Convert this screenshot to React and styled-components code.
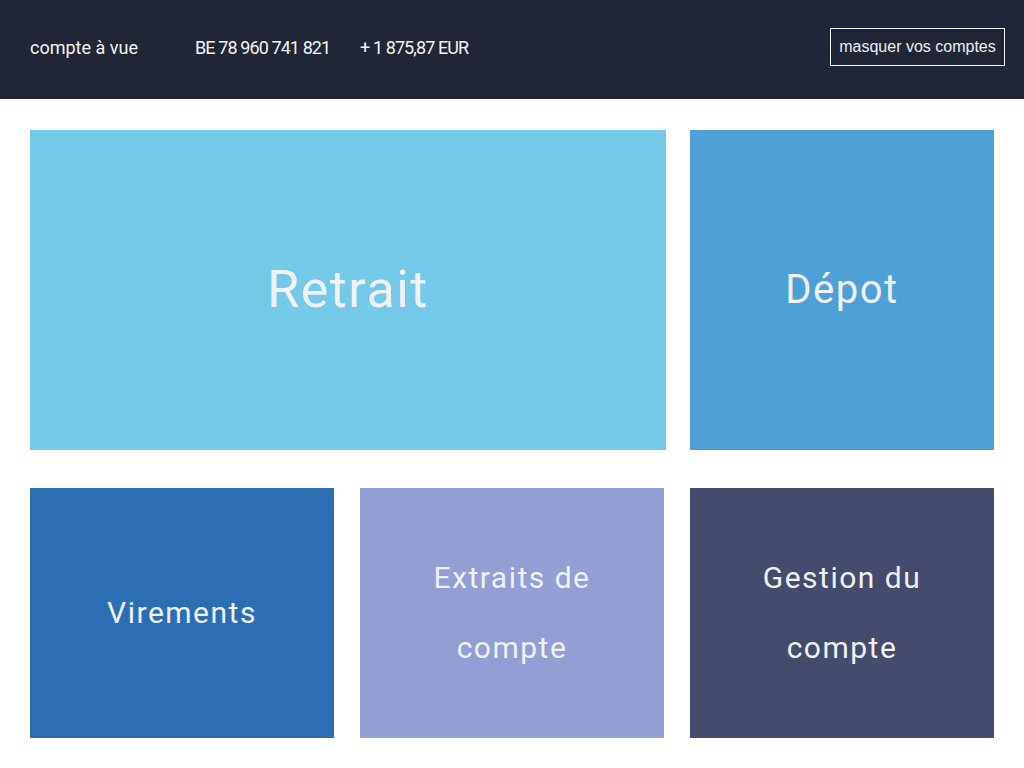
import styled, { createGlobalStyle } from "styled-components";

const GlobalStyle = createGlobalStyle`
  body {
    margin: 0;
    background: #ffffff;
    font-family: Roboto, "Liberation Sans", sans-serif;
  }
`;

const tiles = {
  top: [
    { label: "Retrait", color: "#74c9e9", size: 52 },
    { label: "Dépot", color: "#4fa0d6", size: 40 },
  ],
  bottom: [
    { label: "Virements", color: "#2b6eb4", size: 30 },
    { label: "Extraits de compte", color: "#939ed5", size: 30 },
    { label: "Gestion du compte", color: "#444b6c", size: 30 },
  ],
};

const App = () => {
  return (
    <>
      <GlobalStyle />
      <Header>
        <Account>
          <Info $width={165}>compte à vue</Info>
          <Info $width={165} $tight>BE 78 960 741 821</Info>
          <Info $tight>+ 1 875,87 EUR</Info>
        </Account>
        <HideButton type="button">masquer vos comptes</HideButton>
      </Header>
      <Main>
        <TopRow>
          {tiles.top.map((t) => (
            <Tile key={t.label} $color={t.color} $size={t.size}>
              <span>{t.label}</span>
            </Tile>
          ))}
        </TopRow>
        <BottomRow>
          {tiles.bottom.map((t) => (
            <Tile key={t.label} $color={t.color} $size={t.size} $narrow>
              <span>{t.label}</span>
            </Tile>
          ))}
        </BottomRow>
      </Main>
    </>
  );
};

const Header = styled.header`
  height: 99px;
  background: #212636;
  display: flex;
  align-items: center;
  justify-content: space-between;
  padding: 0 19px 0 30px;
  box-sizing: border-box;
`;

const Account = styled.div`
  display: flex;
  align-items: center;
  margin-top: -4px;
`;

const Info = styled.span`
  color: #f2f2f2;
  font-size: 18px;
  letter-spacing: ${(p) => (p.$tight ? "-0.9px" : "0")};
  width: ${(p) => (p.$width ? `${p.$width}px` : "auto")};
  white-space: nowrap;
`;

const HideButton = styled.button`
  width: 175px;
  height: 38px;
  margin-top: -6px;
  background: transparent;
  border: 1px solid #f2f2f2;
  color: #eeeeee;
  font-family: "Liberation Sans", Arial, sans-serif;
  font-size: 16px;
  padding: 0;
  cursor: pointer;
`;

const Main = styled.main`
  padding: 31px 30px 30px;
  display: flex;
  flex-direction: column;
  gap: 38px;
`;

const TopRow = styled.div`
  display: grid;
  grid-template-columns: 636px 304px;
  justify-content: space-between;
  height: 320px;
`;

const BottomRow = styled.div`
  display: grid;
  grid-template-columns: 304px 304px 304px;
  justify-content: space-between;
  height: 250px;
`;

const Tile = styled.div`
  background: ${(p) => p.$color};
  display: flex;
  align-items: center;
  justify-content: center;
  text-align: center;
  color: #f0f1f5;
  font-size: ${(p) => p.$size}px;
  letter-spacing: 1.5px;
  line-height: 70px;
  padding: 0 ${(p) => (p.$narrow ? 60 : 20)}px;
  cursor: pointer;
`;

export default App;
